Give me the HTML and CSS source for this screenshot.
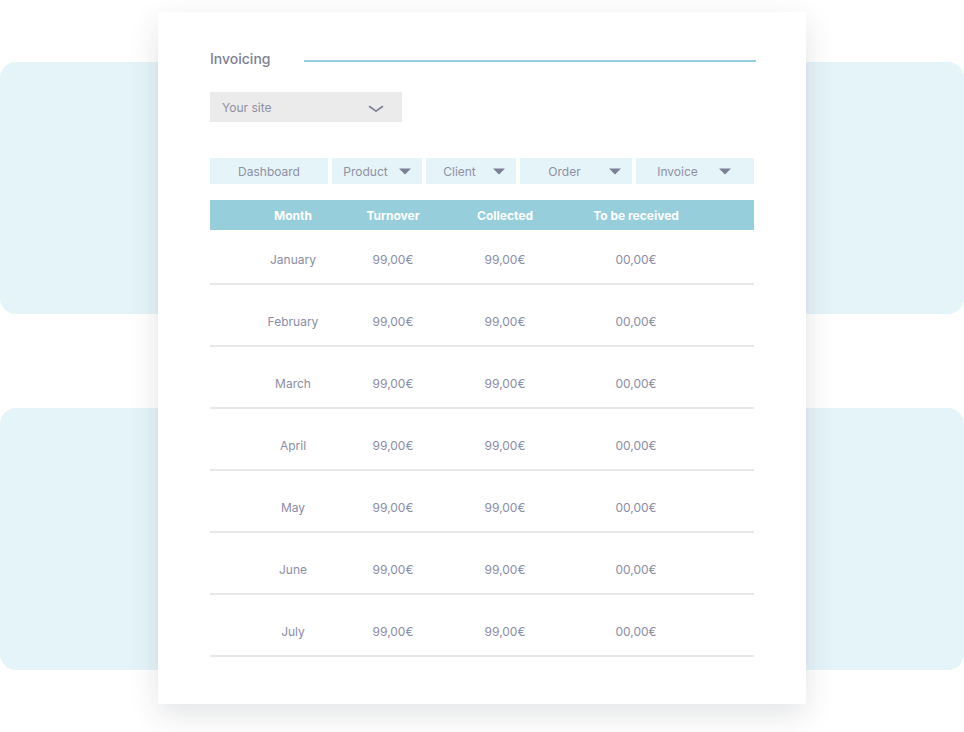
FILE: index.html
```html
<!DOCTYPE html>
<html lang="en">
<head>
<meta charset="utf-8">
<title>Invoicing</title>
<link rel="stylesheet" href="styles.css">
</head>
<body>
<div class="page">
  <div class="backdrop">
    <div class="panel panel-top"></div>
    <div class="panel panel-bottom"></div>
  </div>
  <div class="card">
    <div class="title-row">
      <div class="title">Invoicing</div>
      <div class="title-line"></div>
    </div>
    <div class="select">
      <span class="select-label">Your site</span>
      <svg class="chevron" width="16" height="8" viewBox="0 0 16 8"><path d="M1.5 1.5 L8 6.2 L14.5 1.5" fill="none" stroke="#7d7f96" stroke-width="1.6" stroke-linecap="round" stroke-linejoin="round"/></svg>
    </div>
    <div class="tabs">
      <div class="tab tab-dashboard"><span class="tab-label">Dashboard</span></div>
      <div class="tab tab-product tab-drop"><span class="tab-label">Product</span><svg class="caret" width="12" height="7" viewBox="0 0 12 7"><path d="M0 0.5 H12 L6 6.5 Z" fill="#7d7f96"/></svg></div>
      <div class="tab tab-client tab-drop"><span class="tab-label">Client</span><svg class="caret" width="12" height="7" viewBox="0 0 12 7"><path d="M0 0.5 H12 L6 6.5 Z" fill="#7d7f96"/></svg></div>
      <div class="tab tab-order tab-drop"><span class="tab-label">Order</span><svg class="caret" width="12" height="7" viewBox="0 0 12 7"><path d="M0 0.5 H12 L6 6.5 Z" fill="#7d7f96"/></svg></div>
      <div class="tab tab-invoice tab-drop"><span class="tab-label">Invoice</span><svg class="caret caret-wide" width="12" height="7" viewBox="0 0 12 7"><path d="M0 0.5 H12 L6 6.5 Z" fill="#7d7f96"/></svg></div>
    </div>
    <div class="table">
      <div class="thead">
        <span>Month</span><span>Turnover</span><span>Collected</span><span>To be received</span>
      </div>
      <div class="row row-first"><span>January</span><span>99,00€</span><span>99,00€</span><span>00,00€</span></div>
      <div class="row"><span>February</span><span>99,00€</span><span>99,00€</span><span>00,00€</span></div>
      <div class="row"><span>March</span><span>99,00€</span><span>99,00€</span><span>00,00€</span></div>
      <div class="row"><span>April</span><span>99,00€</span><span>99,00€</span><span>00,00€</span></div>
      <div class="row"><span>May</span><span>99,00€</span><span>99,00€</span><span>00,00€</span></div>
      <div class="row"><span>June</span><span>99,00€</span><span>99,00€</span><span>00,00€</span></div>
      <div class="row"><span>July</span><span>99,00€</span><span>99,00€</span><span>00,00€</span></div>
    </div>
  </div>
</div>
</body>
</html>
```
FILE: styles.css
```css
* { box-sizing: border-box; }
html, body { margin: 0; padding: 0; background: #ffffff; }
body { font-family: Inter, "Noto Sans", "Liberation Sans", sans-serif; }

.page {
  position: relative;
  width: 964px;
  height: 732px;
  overflow: hidden;
}

.backdrop {
  display: flex;
  flex-direction: column;
  padding-top: 62px;
  gap: 94px;
}
.panel {
  background: #e5f4f8;
  border-radius: 16px;
  width: 964px;
}
.panel-top { height: 252px; }
.panel-bottom { height: 262px; }

.card {
  position: absolute;
  left: 158px;
  top: 12px;
  width: 648px;
  height: 692px;
  background: #ffffff;
  box-shadow: 0 10px 28px rgba(40, 50, 60, 0.13);
  padding: 37px 50px 0 52px;
  display: flex;
  flex-direction: column;
}

.title-row {
  display: flex;
  align-items: flex-start;
  height: 20px;
}
.title {
  width: 94px;
  font-size: 14px;
  line-height: 20px;
  color: #7d7f96;
  font-weight: 500;
}
.title-line {
  flex: 1;
  height: 2px;
  margin-top: 11px;
  background: #94cddb;
}

.select {
  margin-top: 23px;
  width: 192px;
  height: 30px;
  background: #ebebeb;
  display: flex;
  align-items: center;
  justify-content: space-between;
  padding: 0 18px 0 12px;
}
.select-label {
  font-size: 12px;
  color: #8e90a4;
}
.chevron { margin-top: 3px; }

.tabs {
  margin-top: 36px;
  display: flex;
  gap: 4px;
  width: 544px;
}
.tab {
  height: 26px;
  background: #e5f4f8;
  display: flex;
  align-items: center;
  font-size: 12px;
  color: #8e90a4;
}
.tab-label { flex: 1; text-align: center; }
.tab-dashboard { width: 118px; }
.tab-product { width: 90px; }
.tab-client { width: 90px; }
.tab-order { width: 112px; }
.tab-invoice { width: 118px; }
.caret { margin-right: 11px; flex: none; }
.caret-wide { margin-right: 23px; }

.table {
  margin-top: 16px;
  width: 544px;
}
.thead, .row {
  display: grid;
  grid-template-columns: 100px 100px 124px 138px;
  padding-left: 33px;
  text-align: center;
}
.thead {
  height: 30px;
  background: #96cedb;
  align-items: center;
  color: #ffffff;
  font-size: 12px;
  font-weight: 700;
}
.row {
  height: 62px;
  padding-top: 29px;
  border-bottom: 2px solid #e8e8ea;
  font-size: 12px;
  line-height: 16px;
  color: #8b8da3;
}
.row-first {
  height: 55px;
  padding-top: 22px;
}
```
